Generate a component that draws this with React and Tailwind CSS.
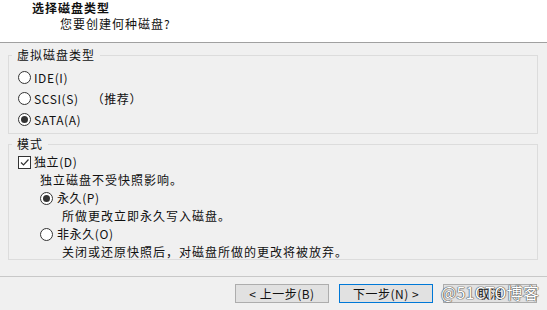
import React from 'react';

const font = { fontFamily: '"Noto Sans CJK SC", "Noto Sans", sans-serif' };

const Radio = ({ checked }) => (
  <span className="w-[13px] h-[13px] rounded-full border border-[#333] bg-white flex items-center justify-center shrink-0">
    {checked && <span className="w-[7px] h-[7px] rounded-full bg-[#333]" />}
  </span>
);

const Check = () => (
  <span className="w-[13px] h-[13px] border border-[#333] bg-white flex items-center justify-center shrink-0">
    <svg width="11" height="11" viewBox="0 0 11 11">
      <path d="M2 5.5 L4.5 8 L9.5 2.5" fill="none" stroke="#333" strokeWidth="1.2" />
    </svg>
  </span>
);

const Row = ({ children, h = 'h-[21px]', indent = '' }) => (
  <div className={`flex items-center gap-[3px] ${h} ${indent}`}>{children}</div>
);

const Btn = ({ children, primary }) => (
  <button
    className={`w-[94px] h-[19px] flex items-center justify-center text-[12px] tracking-[0.5px] text-[#111] bg-[#e1e1e1] border ${
      primary ? 'border-[#0078d7]' : 'border-[#adadad]'
    }`}
  >
    {children}
  </button>
);

export default function App() {
  return (
    <div style={font} className="w-[547px] h-[310px] bg-[#f0f0f0] flex flex-col overflow-hidden relative text-[#111]">
      <div className="h-[43px] bg-white border-b border-[#a0a0a0] pl-[32px] shrink-0">
        <div className="text-[12px] font-bold leading-[16px] tracking-[1px]">选择磁盘类型</div>
        <div className="text-[12px] leading-[16px] tracking-[1px] pl-[28px]">您要创建何种磁盘?</div>
      </div>

      <div className="pl-[8px] pt-[4px]">
        <fieldset className="w-[530px] h-[87px] border border-[#dcdcdc] pl-[3px] pr-0 pb-0">
          <legend className="px-[5px] text-[12px] leading-[16px] tracking-[1px]">虚拟磁盘类型</legend>
          <div className="pl-[6px] pt-[4px] text-[12px] tracking-[0.6px]">
            <Row><Radio /><span>IDE(I)</span></Row>
            <Row><Radio /><span>SCSI(S)</span><span className="ml-[10px]">（推荐）</span></Row>
            <Row><Radio checked /><span>SATA(A)</span></Row>
          </div>
        </fieldset>

        <fieldset className="mt-[2px] w-[530px] h-[124px] border border-[#dcdcdc] pl-[3px] pr-0 pb-0">
          <legend className="px-[5px] text-[12px] leading-[16px] tracking-[1px]">模式</legend>
          <div className="pl-[6px] pt-[1px] text-[12px] tracking-[0.6px]">
            <Row h="h-[18px]"><Check /><span>独立(D)</span></Row>
            <Row h="h-[18px]" indent="pl-[22px]"><span className="tracking-[1px]">独立磁盘不受快照影响。</span></Row>
            <Row h="h-[18px]" indent="pl-[22px]"><Radio checked /><span className="ml-[1px]">永久(P)</span></Row>
            <Row h="h-[18px]" indent="pl-[44px]"><span className="tracking-[1px]">所做更改立即永久写入磁盘。</span></Row>
            <Row h="h-[18px]" indent="pl-[22px]"><Radio /><span className="ml-[1px]">非永久(O)</span></Row>
            <Row h="h-[18px]" indent="pl-[44px]"><span className="tracking-[1px]">关闭或还原快照后，对磁盘所做的更改将被放弃。</span></Row>
          </div>
        </fieldset>
      </div>

      <div className="mt-[16px] border-t border-[#c8c8c8] flex-1 flex justify-end items-start pt-[7px] pr-[10px] gap-[10px]">
        <Btn>&lt; 上一步(B)</Btn>
        <Btn primary>下一步(N) &gt;</Btn>
        <Btn>取消</Btn>
      </div>

      <div
        className="absolute left-[441px] top-[283px] text-[16px] leading-[19px] text-white tracking-[0.3px]"
        style={{ textShadow: '0 0 1px #444, 0 0 1px #444, 0 0 1px #444' }}
      >
        @51CTO博客
      </div>
    </div>
  );
}
